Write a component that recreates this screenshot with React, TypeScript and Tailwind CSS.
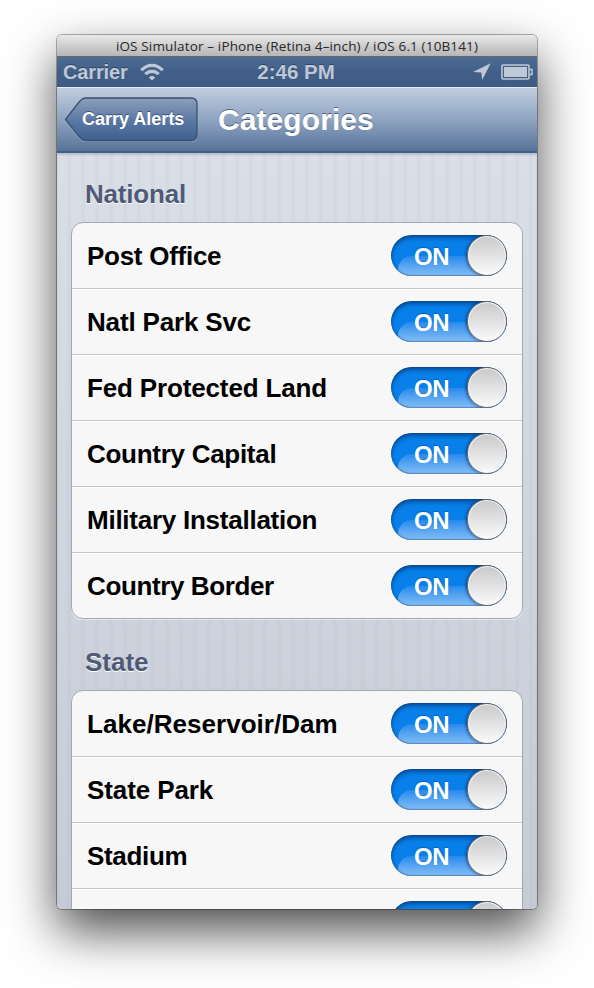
import React from "react";

const HELV = "font-['Liberation_Sans',Arial,sans-serif] font-bold";

type Item = { label: string; spacing: string };

const national: Item[] = [
  { label: "Post Office", spacing: "tracking-[-0.27px]" },
  { label: "Natl Park Svc", spacing: "tracking-[-0.17px]" },
  { label: "Fed Protected Land", spacing: "tracking-[-0.15px]" },
  { label: "Country Capital", spacing: "tracking-[-0.28px]" },
  { label: "Military Installation", spacing: "tracking-[-0.25px]" },
  { label: "Country Border", spacing: "tracking-[-0.38px]" },
];

const state: Item[] = [
  { label: "Lake/Reservoir/Dam", spacing: "tracking-[0.04px]" },
  { label: "State Park", spacing: "tracking-[-0.1px]" },
  { label: "Stadium", spacing: "tracking-[-0.33px]" },
  { label: "", spacing: "tracking-[0px]" },
];

function Toggle({ text }: { text: string }) {
  return (
    <div className="relative h-[41px] w-[116px] shrink-0 overflow-hidden rounded-full bg-[#0780ea]">
      <div className="absolute top-[21px] left-[7px] h-[30px] w-[120px] rounded-tl-[14px] bg-linear-to-b from-[#258aec] to-[#7fbdf6] to-65%" />
      <div className="absolute inset-0 rounded-full shadow-[inset_0_3px_4px_rgba(0,35,90,0.55),inset_0_0_1px_1px_rgba(60,80,110,0.45)]" />
      {text && (
        <span className={`${HELV} absolute top-[7px] left-[23px] text-[24px] leading-[29px] tracking-[-0.4px] text-white [text-shadow:0_-1px_1px_rgba(0,50,120,0.4)]`}>{text}</span>
      )}
      <div className="absolute top-0 right-0 h-[41px] w-[40px] rounded-full border-[1.5px] border-[#6a6a6c] bg-linear-to-b from-[#c9c9c9] to-[#fbfbfb] shadow-[-1px_0_3px_rgba(0,30,80,0.6),inset_0_0_1px_1px_#f8f8f8]" />
    </div>
  );
}

function Row({ item, first }: { item: Item; first: boolean }) {
  return (
    <div className={`flex items-center justify-between px-[15px] ${first ? "h-[65px]" : "h-[66px] border-t border-[#c2c3c5] shadow-[inset_0_1px_0_#fff]"}`}>
      <span className={`${HELV} text-[26px] leading-[30px] whitespace-nowrap text-black ${item.spacing}`}>{item.label}</span>
      <Toggle text={item.label ? "ON" : ""} />
    </div>
  );
}

function Section({ title, items, heading }: { title: string; items: Item[]; heading: string }) {
  return (
    <section>
      <h2 className={`${HELV} flex items-center text-[26px] leading-[30px] text-[#4f5b76] [text-shadow:0_1px_0_#fff] ${heading}`}>{title}</h2>
      <div className="mx-[14px] overflow-hidden rounded-[12px] border border-[#a2a7b1] bg-[#f7f7f7] shadow-[0_1px_0_0_rgba(255,255,255,0.5)]">
        {items.map((item, i) => (
          <Row key={i} item={item} first={i === 0} />
        ))}
      </div>
    </section>
  );
}

export default function App() {
  return (
    <div className="h-[988px] w-[594px] overflow-hidden bg-white pt-[35px] pl-[57px]">
      <div className="h-[874px] w-[480px] rounded-[5px] shadow-[0_0_0_1px_rgba(0,0,0,0.3),0_22px_50px_rgba(0,0,0,0.7)]">
        <div className="flex h-full flex-col overflow-hidden rounded-[5px] bg-[#ccd1db]">
          <div className="flex h-[22px] shrink-0 items-center justify-center border-b border-[#696969] bg-linear-to-b from-[#e9e9e9] to-[#b6b6b6]">
            <span className="font-['Open_Sans','Noto_Sans',sans-serif] text-[13.5px] leading-[20px] tracking-[0.15px] whitespace-nowrap text-[#282828]">iOS Simulator – iPhone (Retina 4–inch) / iOS 6.1 (10B141)</span>
          </div>

          <div className={`${HELV} grid h-[30px] shrink-0 grid-cols-3 items-center bg-linear-to-b from-[#4e6c93] via-[#425f89] to-[#3f5b83] text-[20px] leading-[30px] text-[#bec8d6] [text-shadow:0_-1px_0_rgba(30,45,75,0.6)]`}>
            <div className="flex items-center gap-[12px] pl-[6px]">
              <span className="tracking-[-0.15px]">Carrier</span>
              <svg width="24" height="18" viewBox="0 0 24 18" fill="none" stroke="#bec8d6" strokeWidth="3.2">
                <path d="M1.3 7.3C7.2 0.6 16.8 0.6 22.7 7.3" />
                <path d="M5.4 11.2C9 7.3 15 7.3 18.6 11.2" />
                <path d="M12 17.6L8.9 14.6C10.4 12.6 13.6 12.6 15.1 14.6Z" fill="#bec8d6" stroke="none" />
              </svg>
            </div>
            <span className="pr-[2px] text-center text-[20.5px]">2:46 PM</span>
            <div className="flex items-center justify-end gap-[10px] pr-[4px]">
              <svg width="18" height="18" viewBox="0 0 18 18">
                <path d="M17.7 0.3L9.2 17L8.3 9.6L0 8.9Z" fill="#bec8d6" />
              </svg>
              <svg width="32" height="16" viewBox="0 0 32 16">
                <rect x="1" y="1" width="27" height="14" rx="1" fill="none" stroke="#bec8d6" strokeWidth="1.6" />
                <rect x="3" y="3" width="23" height="10" fill="#bec8d6" />
                <path d="M28.5 5.5H31V10.5H28.5" fill="none" stroke="#bec8d6" strokeWidth="1.5" />
              </svg>
            </div>
          </div>

          <header className="flex h-[66px] shrink-0 items-center border-t border-b-2 border-t-[#e4eaf2] border-b-[#3f5d87] bg-linear-to-b from-[#c0cde0] via-[#8fa4c2] to-[#587399] pl-[7px]">
            <div className="relative h-[45px] w-[135px] shrink-0">
              <svg className="absolute inset-0" width="135" height="45" viewBox="0 0 135 45">
                <defs>
                  <linearGradient id="back" x1="0" y1="0" x2="0" y2="1">
                    <stop offset="0" stopColor="#8d9fbb" />
                    <stop offset="0.5" stopColor="#5d7aa6" />
                    <stop offset="1" stopColor="#3e6090" />
                  </linearGradient>
                </defs>
                <path d="M1.5 23.5L15 6Q18.500 1.800 22 1.500H127Q133 1.500 133 7.500V39Q133 45 127 45H22Q18.500 44.500 15 41Z" fill="none" stroke="#b3c1d5" strokeOpacity="0.6" />
                <path d="M1.5 22.500L15 5Q18.500 1 22 1H127Q133 1 133 7V37.500Q133 43.500 127 43.500H22Q18.500 43.500 15 39.500Z" fill="url(#back)" stroke="#3c506f" strokeWidth="1.3" />
              </svg>
              <span className={`${HELV} relative block pl-[18px] text-[18px] leading-[44px] whitespace-nowrap text-white [text-shadow:0_-1px_0_rgba(30,45,75,0.6)]`}>Carry Alerts</span>
            </div>
            <h1 className={`${HELV} ml-[19px] text-[30px] leading-[40px] tracking-[0.08px] text-white [text-shadow:0_-1.5px_0_rgba(50,65,90,0.7)]`}>Categories</h1>
          </header>

          <main className="min-h-0 flex-1 overflow-hidden bg-[repeating-linear-gradient(90deg,transparent_0px,transparent_10px,rgba(90,110,150,0.035)_10px,rgba(90,110,150,0.035)_14px),linear-gradient(#d9dee7,#c7cbd6)] shadow-[inset_0_2px_2px_rgba(60,80,110,0.2)]">
            <Section title="National" items={national} heading="h-[69px] pt-[13px] pl-[28px] tracking-[-0.2px]" />
            <Section title="State" items={state} heading="h-[71px] pt-[15px] pl-[28px] tracking-[0px]" />
          </main>
        </div>
      </div>
    </div>
  );
}
